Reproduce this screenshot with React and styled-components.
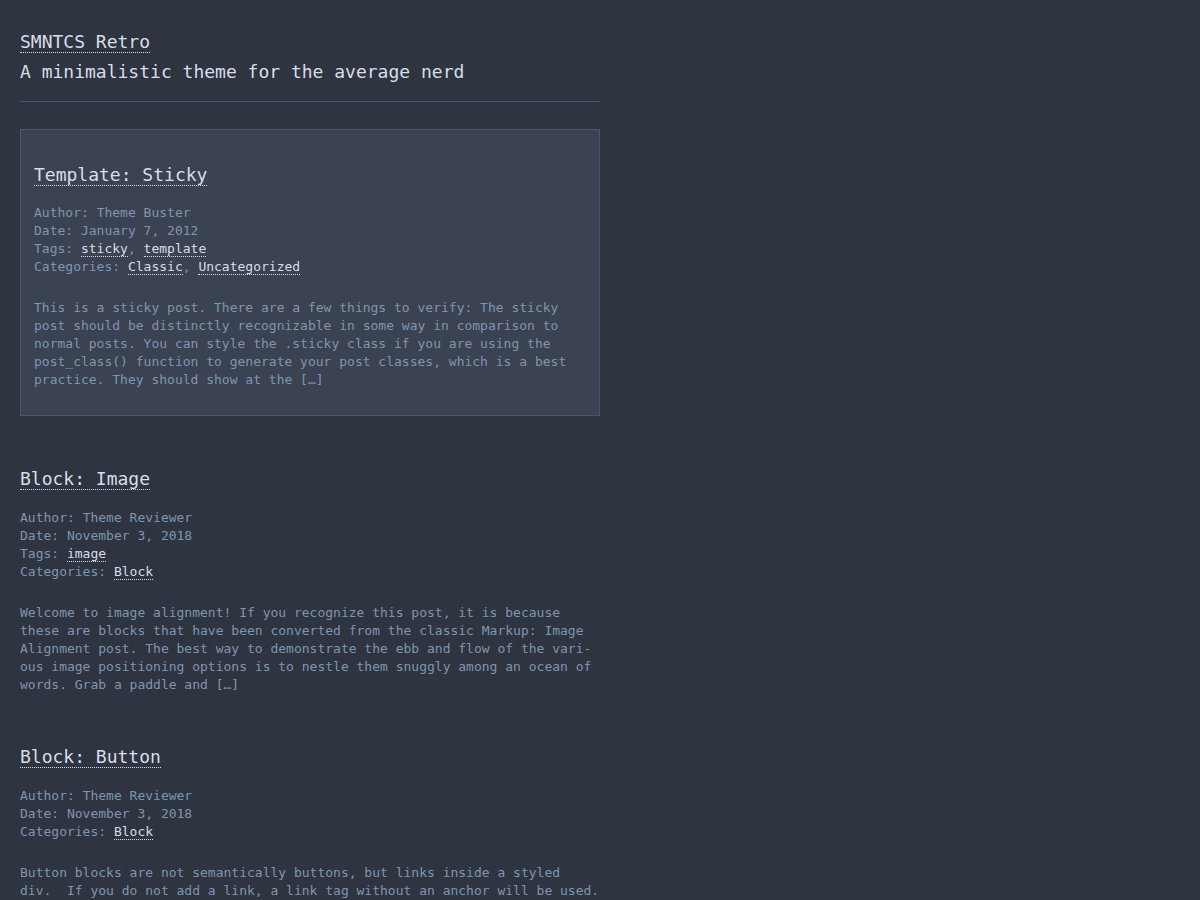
import React from 'react';
import styled, { createGlobalStyle } from 'styled-components';

const GlobalStyle = createGlobalStyle`
    html, body {
        margin: 0;
        padding: 0;
        background: #2e3440;
    }
    body {
        font-family: "DejaVu Sans Mono", "Liberation Mono", monospace;
        color: #d8dee9;
    }
`

const Page = styled.div`
    width: 580px;
    padding: 27px 20px 40px 20px;
`

const Header = styled.header`
    border-bottom: 1px solid #4c566a;
    padding-bottom: 14px;
    margin-bottom: 27px;
`

const SiteTitle = styled.div`
    font-size: 18px;
    line-height: 30px;
`

const SiteDesc = styled.p`
    margin: 0;
    font-size: 18px;
    line-height: 30px;
    color: #d8dee9;
`

const Link = styled.a`
    color: #d8dee9;
    text-decoration: none;
    border-bottom: 1px dotted #d8dee9;
    cursor: pointer;
`

const Post = styled.article`
    margin-bottom: 49px;
    ${props => props.sticky && `
        background: #3b4252;
        border: 1px solid #4c566a;
        padding: 31px 13px 26px 13px;
    `}
`

const PostTitle = styled.h2`
    margin: 0 0 ${props => props.sticky ? 16 : 17}px 0;
    font-size: 18px;
    line-height: 27px;
    font-weight: normal;
`

const Meta = styled.div`
    font-size: 13px;
    line-height: 18px;
    color: #7f96b0;
    margin-bottom: 23px;
`

const Excerpt = styled.p`
    margin: 0;
    font-size: 13px;
    line-height: 18px;
    color: #7f96b0;
`

const posts = [
    {
        title: 'Template: Sticky',
        sticky: true,
        author: 'Theme Buster',
        date: 'January 7, 2012',
        tags: ['sticky', 'template'],
        categories: ['Classic', 'Uncategorized'],
        excerpt: 'This is a sticky post. There are a few things to verify: The sticky post should be distinctly recognizable in some way in comparison to normal posts. You can style the .sticky class if you are using the post_class() function to generate your post classes, which is a best practice. They should show at the […]'
    },
    {
        title: 'Block: Image',
        author: 'Theme Reviewer',
        date: 'November 3, 2018',
        tags: ['image'],
        categories: ['Block'],
        excerpt: 'Welcome to image alignment! If you recognize this post, it is because these are blocks that have been converted from the classic Markup: Image Alignment post. The best way to demonstrate the ebb and flow of the vari\u00ADous image positioning options is to nestle them snuggly among an ocean of words. Grab a paddle and […]'
    },
    {
        title: 'Block: Button',
        author: 'Theme Reviewer',
        date: 'November 3, 2018',
        categories: ['Block'],
        excerpt: 'Button blocks are not semantically buttons, but links inside a styled div.\u00A0 If you do not add a link, a link tag without an anchor will be used.'
    }
]

function LinkList({ items }) {
    return items.map((item, i) => (
        <React.Fragment key={item}>
            {i > 0 && ', '}
            <Link>{item}</Link>
        </React.Fragment>
    ))
}

export default function App() {
    return (
        <Page>
            <GlobalStyle />
            <Header>
                <SiteTitle><Link>SMNTCS Retro</Link></SiteTitle>
                <SiteDesc>A minimalistic theme for the average nerd</SiteDesc>
            </Header>
            {posts.map(post => (
                <Post key={post.title} sticky={post.sticky}>
                    <PostTitle sticky={post.sticky}><Link>{post.title}</Link></PostTitle>
                    <Meta>
                        <div>Author: {post.author}</div>
                        <div>Date: {post.date}</div>
                        {post.tags && <div>Tags: <LinkList items={post.tags} /></div>}
                        <div>Categories: <LinkList items={post.categories} /></div>
                    </Meta>
                    <Excerpt>{post.excerpt}</Excerpt>
                </Post>
            ))}
        </Page>
    );
}
